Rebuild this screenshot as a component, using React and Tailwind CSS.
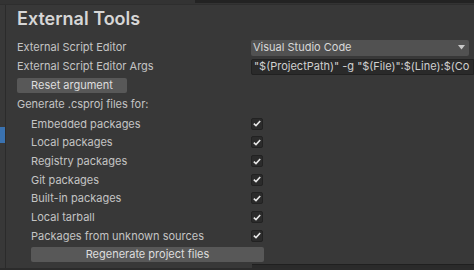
import React from "react";

const packageTypes = [
  "Embedded packages",
  "Local packages",
  "Registry packages",
  "Git packages",
  "Built-in packages",
  "Local tarball",
  "Packages from unknown sources",
];

const Checkbox = () => (
  <div className="w-[12px] h-[12px] bg-[#2b2b2b] border border-[#222222] rounded-[2px] flex items-center justify-center">
    <svg width="8" height="7" viewBox="0 0 8 7">
      <path d="M0.8 3.6 L3 5.6 L7.2 1" fill="none" stroke="#e8e8e8" strokeWidth="1.6" />
    </svg>
  </div>
);

const App = () => {
  return (
    <div
      className="w-[474px] h-[270px] bg-[#383838] overflow-hidden flex flex-col text-[#c4c4c4] text-[11px]"
      style={{ fontFamily: "Inter, 'Noto Sans', sans-serif" }}
    >
      {/* top strip */}
      <div className="h-[5px] shrink-0 flex border-b border-[#2e2e2e] bg-[#333333]">
        <div className="w-[195px]" />
        <div className="flex-1 h-[3px] bg-[#232323]" />
      </div>

      <div className="flex flex-1 min-h-0">
        {/* left gutter */}
        <div className="w-[5px] shrink-0 flex flex-col">
          <div className="h-[122px]" />
          <div className="h-[16px] bg-[#3a72b0]" />
        </div>
        <div className="w-[1px] shrink-0 bg-[#2b2b2b]" />

        <div className="flex-1 flex flex-col pl-[11px]">
          <div className="h-[27px] mb-[6px] flex items-center text-[18px] font-semibold text-[#d6d6d6]">
            External Tools
          </div>

          <div className="h-[19px] flex items-center">
            <div className="w-[234px]">External Script Editor</div>
            <div className="w-[218px] h-[16px] bg-[#515151] rounded-[2px] flex items-center justify-between pl-[2px] pr-[4px] text-[#d8d8d8]">
              <span>Visual Studio Code</span>
              <svg width="7" height="5" viewBox="0 0 7 5">
                <path d="M0 0 L7 0 L3.5 4.5 Z" fill="#c8c8c8" />
              </svg>
            </div>
          </div>

          <div className="h-[19px] flex items-center">
            <div className="w-[234px]">External Script Editor Args</div>
            <div className="flex-1 h-[16px] bg-[#2a2a2a] border border-[#212121] rounded-l-[2px] flex items-center pl-[2px] text-[#d0d0d0] whitespace-nowrap overflow-hidden">
              "$(ProjectPath)" -g "$(File)":$(Line):$(Co
            </div>
          </div>

          <div className="h-[19px] flex items-center">
            <button className="w-[110px] h-[15px] bg-[#585858] rounded-[2px] text-[#dedede] flex items-center justify-center leading-none">
              Reset argument
            </button>
          </div>

          <div className="h-[19px] flex items-center">Generate .csproj files for:</div>

          <div className="h-[0.5px]" />
          {packageTypes.map((name) => (
            <div key={name} className="h-[18.67px] flex items-center">
              <div className="w-[14px]" />
              <div className="w-[220px]">{name}</div>
              <Checkbox />
            </div>
          ))}

          <div className="h-[18px] flex items-center">
            <div className="w-[14px]" />
            <button className="w-[233px] h-[15px] bg-[#585858] rounded-[2px] text-[#dedede] flex items-center justify-center leading-none">
              Regenerate project files
            </button>
          </div>

          <div className="flex-1 flex">
            <div className="w-[235px]" />
            <div className="flex-1 mt-[1px] bg-[#2a2a2a] border-t border-[#1f1f1f]" />
          </div>
        </div>
      </div>
      <div className="h-[2px] shrink-0 bg-[#2b2b2b]" />
    </div>
  );
};

export default App;
